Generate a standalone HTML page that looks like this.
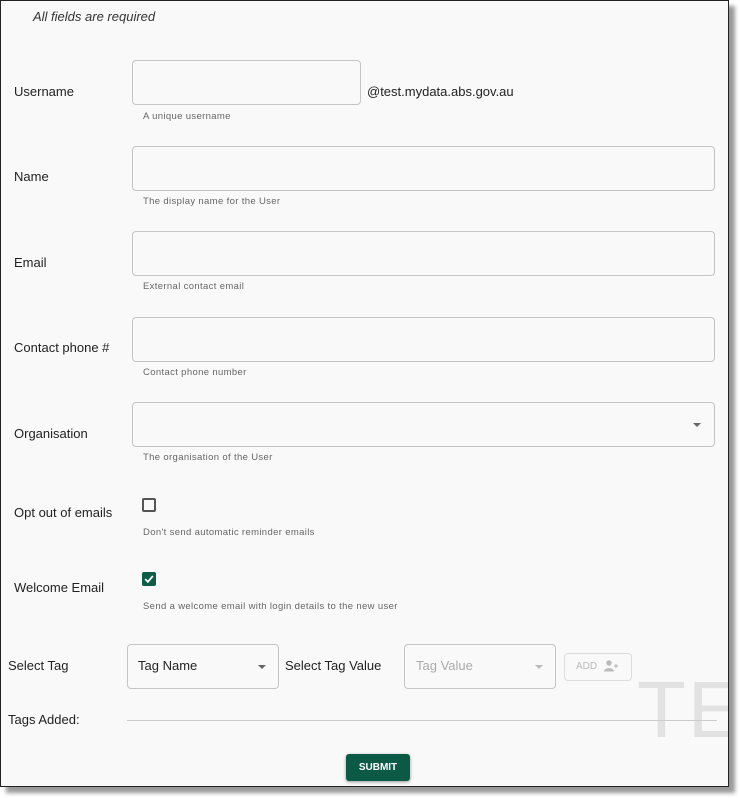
<!DOCTYPE html>
<html><head><style>
body{margin:0;width:740px;height:798px;background:#fff;position:relative;font-family:"Liberation Sans",sans-serif;overflow:hidden}
.frame{position:absolute;left:0;top:0;width:727px;height:785px;border:1px solid #222;background:#f9f9f9;box-shadow:6px 6px 4px #999;overflow:hidden}
.a{position:absolute;white-space:nowrap}
.lbl{font-size:13px;color:#222}
.help{font-size:9.5px;color:#666;letter-spacing:0.35px}
.box{position:absolute;border:1px solid #c4c4c4;border-radius:4px;background:#f9f9f9;box-sizing:border-box}
.cb{position:absolute;width:14px;height:14px;box-sizing:border-box;border:2px solid #555;border-radius:2px}
.arr{position:absolute;width:0;height:0;border-left:4px solid transparent;border-right:4px solid transparent;border-top:4px solid #666}
</style></head><body>
<div class="frame">
<div class="a" style="left:32px;top:8px;font-size:13px;font-style:italic;color:#333">All fields are required</div>

<div class="a lbl" style="left:13px;top:83px">Username</div>
<div class="box" style="left:131px;top:59px;width:229px;height:45px"></div>
<div class="a" style="left:366px;top:83px;font-size:13px;color:#222">@test.mydata.abs.gov.au</div>
<div class="a help" style="left:142px;top:110px">A unique username</div>

<div class="a lbl" style="left:13px;top:168px">Name</div>
<div class="box" style="left:131px;top:145px;width:583px;height:45px"></div>
<div class="a help" style="left:142px;top:195px">The display name for the User</div>

<div class="a lbl" style="left:13px;top:254px">Email</div>
<div class="box" style="left:131px;top:230px;width:583px;height:45px"></div>
<div class="a help" style="left:142px;top:280px">External contact email</div>

<div class="a lbl" style="left:13px;top:339px">Contact phone #</div>
<div class="box" style="left:131px;top:316px;width:583px;height:45px"></div>
<div class="a help" style="left:142px;top:366px">Contact phone number</div>

<div class="a lbl" style="left:13px;top:425px">Organisation</div>
<div class="box" style="left:131px;top:401px;width:583px;height:45px"></div>
<div class="arr" style="left:692px;top:422px"></div>
<div class="a help" style="left:142px;top:451px">The organisation of the User</div>

<div class="a lbl" style="left:13px;top:504px">Opt out of emails</div>
<div class="cb" style="left:141px;top:497px"></div>
<div class="a help" style="left:142px;top:526px">Don't send automatic reminder emails</div>

<div class="a lbl" style="left:13px;top:579px">Welcome Email</div>
<div class="cb" style="left:141px;top:571px;background:#0d5c46;border-color:#0d5c46"><svg width="10" height="10" viewBox="0 0 9 9" style="position:absolute;left:0;top:0"><path d="M1 4.5 L3.5 7 L8 1.8" stroke="#fff" stroke-width="1.6" fill="none"/></svg></div>
<div class="a help" style="left:142px;top:600px">Send a welcome email with login details to the new user</div>

<div class="a" style="left:636px;top:663px;font-size:80px;color:#e2e2e2;letter-spacing:2px">TES</div>

<div class="a lbl" style="left:7px;top:657px">Select Tag</div>
<div class="box" style="left:126px;top:643px;width:152px;height:45px"></div>
<div class="a lbl" style="left:137px;top:657px">Tag Name</div>
<div class="arr" style="left:257px;top:664px"></div>
<div class="a lbl" style="left:284px;top:657px">Select Tag Value</div>
<div class="box" style="left:403px;top:643px;width:152px;height:45px"></div>
<div class="a lbl" style="left:415px;top:657px;color:#aaa">Tag Value</div>
<div class="arr" style="left:534px;top:664px;border-top-color:#bbb"></div>
<div class="box" style="left:563px;top:652px;width:68px;height:28px;border-color:#ddd"></div>
<div class="a" style="left:575px;top:660px;font-size:10px;color:#bbb">ADD</div>
<svg class="a" style="left:603px;top:659px" width="16" height="12" viewBox="0 0 16 12"><circle cx="5" cy="3" r="2.7" fill="#bbb"/><path d="M0 11.5 C0 7 10 7 10 11.5Z" fill="#bbb"/><path d="M12 4v4M10 6h4" stroke="#bbb" stroke-width="1.2"/></svg>

<div class="a lbl" style="left:7px;top:711px">Tags Added:</div>
<div class="a" style="left:126px;top:719px;width:590px;height:1px;background:#ccc"></div>

<div class="a" style="left:345px;top:753px;width:64px;height:27px;background:#0b5a45;border-radius:3px;box-shadow:0 1px 3px rgba(0,0,0,.4);color:#fff;font-size:10px;font-weight:bold;text-align:center;line-height:27px">SUBMIT</div>
</div>
</body></html>
